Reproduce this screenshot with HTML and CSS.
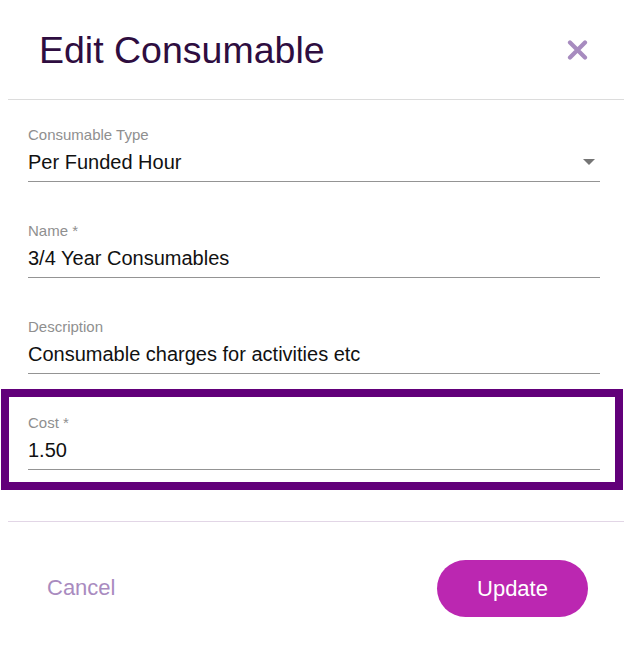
FILE: index.html
```html
<!DOCTYPE html>
<html lang="en">
<head>
<meta charset="utf-8">
<title>Edit Consumable</title>
<link rel="stylesheet" href="styles.css">
</head>
<body>
<div class="dialog">
  <header class="dialog-header">
    <h1 class="dialog-title">Edit Consumable</h1>
    <button class="close-btn" aria-label="Close">
      <svg width="21" height="20" viewBox="0 0 21 20"><path d="M3 2.5 L18 17.5 M18 2.5 L3 17.5" stroke="#a78bbf" stroke-width="4.2" stroke-linecap="round"/></svg>
    </button>
  </header>
  <div class="divider"></div>
  <form class="form">
    <div class="field">
      <div class="field-label">Consumable Type</div>
      <div class="field-value select">
        <span>Per Funded Hour</span>
        <svg class="arrow" width="12" height="6" viewBox="0 0 12 6"><path d="M0 0 H12 L6 6 Z" fill="#757575"/></svg>
      </div>
    </div>
    <div class="field">
      <div class="field-label">Name *</div>
      <div class="field-value">3/4 Year Consumables</div>
    </div>
    <div class="field">
      <div class="field-label">Description</div>
      <div class="field-value">Consumable charges for activities etc</div>
    </div>
    <div class="highlight">
      <div class="field">
        <div class="field-label">Cost *</div>
        <div class="field-value">1.50</div>
      </div>
    </div>
  </form>
  <div class="divider footer-divider"></div>
  <footer class="dialog-footer">
    <button class="btn-cancel" type="button">Cancel</button>
    <button class="btn-update" type="button">Update</button>
  </footer>
</div>
</body>
</html>
```
FILE: styles.css
```css
* { box-sizing: border-box; }
html, body { margin: 0; padding: 0; background: #fff; }
body {
  font-family: "Liberation Sans", Arial, sans-serif;
  width: 624px;
  height: 647px;
  overflow: hidden;
}
.dialog { width: 624px; }
.dialog-header {
  height: 99px;
  display: flex;
  align-items: center;
  justify-content: space-between;
  padding: 0 36px 0 39px;
}
.dialog-title {
  margin: 0;
  font-size: 37.5px;
  font-weight: 400;
  color: #2e0d40;
  line-height: 44px;
}
.close-btn {
  border: 0;
  background: none;
  padding: 0;
  width: 21px;
  height: 20px;
  display: block;
}
.close-btn svg { display: block; }
.divider {
  height: 1px;
  background: #dcdcdc;
  margin-left: 8px;
}
.form {
  display: flex;
  flex-direction: column;
  gap: 40px;
  padding: 26px 24px 0 28px;
}
.field { display: flex; flex-direction: column; }
.field-label {
  font-size: 15px;
  line-height: 17px;
  color: #8f8f8f;
}
.field-value {
  margin-top: 8px;
  font-size: 20px;
  line-height: 23px;
  color: #111;
  padding-bottom: 7px;
  border-bottom: 1px solid #949494;
}
.select {
  display: flex;
  align-items: center;
  justify-content: space-between;
}
.arrow { margin-right: 5px; margin-top: -1px; }
.highlight {
  border: 8px solid #62007a;
  margin: -25px -23px -20px -27px;
  padding: 17px 15px 12px 19px;
}
.footer-divider {
  margin-top: 51px;
  background: #e2d6e6;
}
.dialog-footer {
  display: flex;
  align-items: center;
  justify-content: space-between;
  padding: 38px 36px 0 47px;
}
.btn-cancel {
  border: 0;
  background: none;
  padding: 0;
  font-family: inherit;
  font-size: 22px;
  color: #a98bbf;
  margin-top: -2px;
}
.btn-update {
  border: 0;
  width: 151px;
  height: 57px;
  border-radius: 29px;
  background: #bb27b1;
  color: #fff;
  font-family: inherit;
  font-size: 22px;
  padding: 0;
}
```
